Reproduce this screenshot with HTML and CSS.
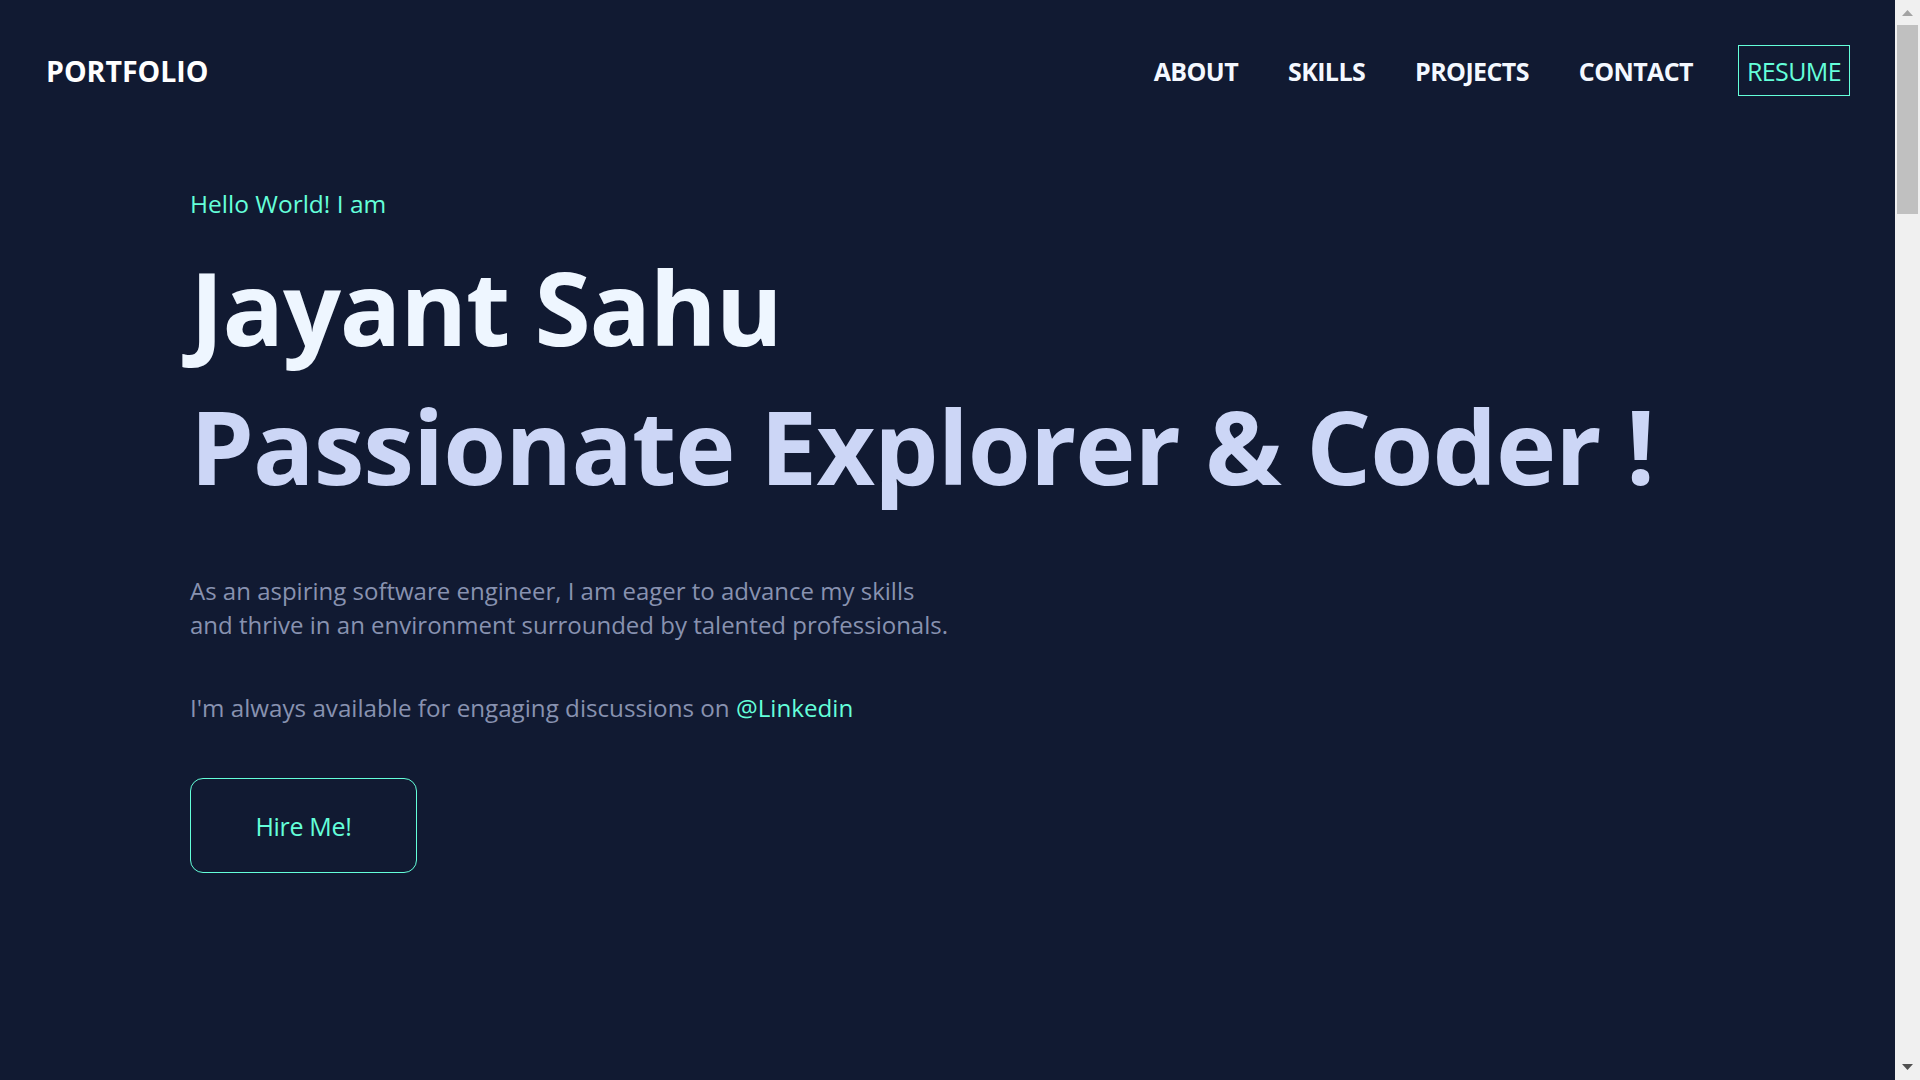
FILE: index.html
```html
<!DOCTYPE html>
<html lang="en">
<head>
<meta charset="utf-8">
<title>Jayant Sahu | Portfolio</title>
<link rel="stylesheet" href="styles.css">
</head>
<body>
<header class="site-header">
  <a class="logo" href="#">PORTFOLIO</a>
  <nav class="nav">
    <ul class="nav-links">
      <li><a href="#about">ABOUT</a></li>
      <li><a href="#skills">SKILLS</a></li>
      <li><a href="#projects">PROJECTS</a></li>
      <li><a href="#contact">CONTACT</a></li>
    </ul>
    <a class="resume" href="#">RESUME</a>
  </nav>
</header>
<main>
  <section class="hero">
    <p class="hello">Hello World! I am</p>
    <h1 class="name">Jayant Sahu</h1>
    <h2 class="tagline">Passionate Explorer &amp; Coder !</h2>
    <p class="intro">As an aspiring software engineer, I am eager to advance my skills<br>and thrive in an environment surrounded by talented professionals.</p>
    <p class="reach">I'm always available for engaging discussions on <a class="link" href="#">@Linkedin</a></p>
    <a class="hire" href="#contact">Hire Me!</a>
  </section>
  <section id="about" class="section"></section>
  <section id="skills" class="section"></section>
  <section id="projects" class="section"></section>
  <section id="contact" class="section"></section>
</main>
<div class="scrollbar" aria-hidden="true">
  <svg class="sb-arrow" width="25" height="25" viewBox="0 0 25 25"><polygon points="7,16 18,16 12.5,10" fill="#a3a3a3"/></svg>
  <div class="sb-track"><div class="sb-thumb"></div></div>
  <svg class="sb-arrow" width="25" height="25" viewBox="0 0 25 25"><polygon points="7,9 18,9 12.5,15" fill="#505050"/></svg>
</div>
</body>
</html>
```
FILE: styles.css
```css
html, body {
  margin: 0;
  padding: 0;
}
body {
  background: #111a32;
  font-family: "Open Sans", "Noto Sans", sans-serif;
  color: #f0f8ff;
  padding-right: 25px;
}
a {
  text-decoration: none;
  color: inherit;
}

.scrollbar {
  position: fixed;
  top: 0;
  right: 0;
  width: 25px;
  height: 100vh;
  background: #f0f0f0;
  display: flex;
  flex-direction: column;
}
.sb-arrow {
  display: block;
  flex: none;
}
.sb-track {
  flex: 1;
  padding: 0 2px;
}
.sb-thumb {
  height: 189px;
  background: #c0c0c0;
}

.site-header {
  display: flex;
  justify-content: space-between;
  align-items: center;
  padding: 45px 45px 0 46px;
}
.logo {
  font-size: 28.5px;
  font-weight: 700;
  color: #ffffff;
}
.nav {
  display: flex;
  align-items: center;
}
.nav-links {
  display: flex;
  gap: 50px;
  list-style: none;
  margin: 0;
  padding: 0;
}
.nav-links a {
  font-size: 25px;
  font-weight: 700;
  color: #f4f8ff;
  letter-spacing: -0.6px;
}
.resume {
  margin-left: 45px;
  height: 51px;
  box-sizing: border-box;
  padding: 0 8px;
  display: flex;
  align-items: center;
  border: 1px solid #64ffda;
  color: #64ffda;
  font-size: 25px;
  letter-spacing: -0.6px;
}

.hero {
  padding: 92px 0 0 190px;
  height: 1080px;
  box-sizing: border-box;
}
.hello {
  margin: 0;
  font-size: 24.5px;
  line-height: 32px;
  color: #64ffda;
}
.name {
  margin: 24px 0 0;
  font-size: 102px;
  line-height: 125px;
  font-weight: 700;
  color: #eef6ff;
  letter-spacing: -1.2px;
}
.tagline {
  margin: 14px 0 0;
  font-size: 102px;
  line-height: 125px;
  font-weight: 700;
  color: #ccd6f6;
  letter-spacing: -1px;
}
.intro {
  margin: 66px 0 0;
  font-size: 24px;
  line-height: 34px;
  color: #8892b0;
}
.reach {
  margin: 49px 0 0;
  font-size: 24.2px;
  line-height: 34px;
  color: #8892b0;
}
.link {
  color: #64ffda;
}
.hire {
  margin-top: 53px;
  width: 227px;
  height: 95px;
  box-sizing: border-box;
  border: 1px solid #64ffda;
  border-radius: 13px;
  display: flex;
  align-items: center;
  justify-content: center;
  color: #64ffda;
  font-size: 25px;
  letter-spacing: -0.3px;
}
.section {
  height: 1201px;
}
```
